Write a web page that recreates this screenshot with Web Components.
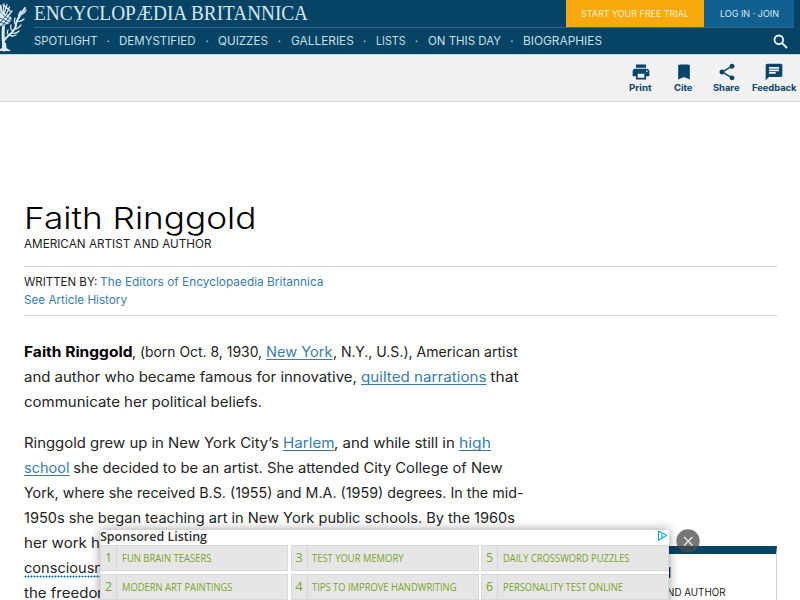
<!DOCTYPE html>
<html lang="en">
<head>
<meta charset="utf-8">
<title>Faith Ringgold</title>
<style>
html,body{margin:0;height:600px;overflow:hidden;background:#fff}
body{font-family:Inter,"Open Sans",sans-serif;color:#1b1b1b}
</style>
</head>
<body>
<article-page></article-page>
<script>
const define = (name, html, setup) => customElements.define(name, class extends HTMLElement {
  connectedCallback() {
    if (this.shadowRoot) return;
    const t = document.createElement('template');
    t.innerHTML = typeof html === 'function' ? html(this) : html;
    this.attachShadow({mode: 'open'}).append(t.content.cloneNode(true));
    if (setup) setup(this);
  }
});

// Text run widened or narrowed to a given advance width.
define('text-run', `<style>:host{display:inline-block;white-space:pre;text-align:left}
span{display:inline-block;transform-origin:0 50%;text-decoration:inherit;text-underline-offset:inherit;text-decoration-skip-ink:none}</style><span><slot></slot></span>`, el => {
  const w = parseFloat(el.getAttribute('w'));
  const span = el.shadowRoot.querySelector('span');
  const scale = w / span.getBoundingClientRect().width;
  span.style.transform = `scaleX(${scale.toFixed(4)})`;
  el.style.width = w + 'px';
});

define('thistle-logo', `<style>:host{display:block;width:28px;height:54px}svg{display:block}</style>
<svg width="28" height="54" viewBox="0 0 28 54" fill="none" stroke="#dcebf1" stroke-linecap="round">
<path stroke="none" fill="#dcebf1" d="M0 14c5-1 10 1 11.500 4 0 5-5 8-11.500 8z"/>
<path stroke-width="1.300" d="M0 5V14M1 6l1 8M4 4 3 14M7 4.500 4 14M9.500 7 6 15M12 11 8 16M3 5l5 4M6 7l4 4"/>
<path stroke="#0a4769" stroke-width=".8" d="M0 18l10 5M0 22l8 3M3 15l8 6M2 26l8-10M0 23l7-8"/>
<path stroke-width="3" d="M3.500 27C2.500 35 3.500 43 4 50"/>
<path stroke-width="2" d="M4.500 40C8 34 15 33 16 25 16 19 21 15 25 8"/>
<path stroke-width="1.300" d="M16 25c-2-2-2-4-1-7M17 21c3 1 5 0 7-2M19 18c-1-3 0-5 2-7M22 14c2 0 3-2 4-4M15 29c3 0 4-2 6-4M13 31c-2-1-3-3-2-6M12 33c3 1 5 0 7-2M9 35c-2-1-2-3-1-5M10 35c2 2 4 1 6 0"/>
<path stroke="none" fill="#dcebf1" d="M2 43h4l.500 5 4.500 3H0v-2l2-1z"/>
</svg>`);

define('site-header', `<style>
:host{display:block;background:#074365;border-bottom:1px solid #c5d2da;box-sizing:border-box;height:55px}
.row{display:flex;height:54px}
.main{flex:1;padding-left:5.500px;padding-right:6px;display:grid;grid-template-rows:28px 26px}
.top{display:flex;justify-content:space-between;background:linear-gradient(#35688a,#35688a) 0 100%/100% 1px no-repeat}
.brand{font:20px/26px "Liberation Serif",serif;color:#d5e8ef}
.buttons{display:flex;font-size:9px;line-height:28px;height:27px}
.trial{background:#f8a90d;width:138px;text-align:center;color:#fff0c8}
.login{background:#12608f;width:90px;text-align:center;color:#d9ecf4}
nav{display:flex;justify-content:space-between;align-items:center;font-size:11.300px;color:#c3e1eb}
.links{display:flex;gap:8.700px}
.dot{width:5px;text-align:center}
svg{margin-right:6px;display:block}
</style>
<div class="row"><thistle-logo></thistle-logo><div class="main">
<div class="top"><div class="brand"><text-run w="157">ENCYCLOPÆDIA </text-run><text-run w="117">BRITANNICA</text-run></div>
<div class="buttons"><div class="trial"><text-run w="108">START YOUR FREE TRIAL</text-run></div><div class="login"><text-run w="59">LOG IN · JOIN</text-run></div></div></div>
<nav><div class="links">
<text-run w="63.500">SPOTLIGHT</text-run><span class="dot">·</span>
<text-run w="76.500">DEMYSTIFIED</text-run><span class="dot">·</span>
<text-run w="50">QUIZZES</text-run><span class="dot">·</span>
<text-run w="62.800">GALLERIES</text-run><span class="dot">·</span>
<text-run w="29.500">LISTS</text-run><span class="dot">·</span>
<text-run w="73">ON THIS DAY</text-run><span class="dot">·</span>
<text-run w="79">BIOGRAPHIES</text-run></div>
<svg width="15" height="15" viewBox="0 0 15 15" fill="none" stroke="#f2f8fb" stroke-width="1.800"><circle cx="5.800" cy="5.800" r="4.300"/><path d="M9 9l5 5"/></svg>
</nav></div></div>`);

const icons = {
  Print: '<path d="M19 8H5c-1.660 0-3 1.340-3 3v6h4v4h12v-4h4v-6c0-1.660-1.340-3-3-3zm-3 11H8v-5h8v5zm3-7c-.550 0-1-.450-1-1s.450-1 1-1 1 .450 1 1-.450 1-1 1zm-1-9H6v4h12V3z"/>',
  Cite: '<path d="M17 3H7c-1.100 0-2 .900-2 2v16l7-3 7 3V5c0-1.100-.900-2-2-2z"/>',
  Share: '<path d="M18 16.080c-.760 0-1.440.300-1.960.770L8.910 12.700c.050-.230.090-.460.090-.700s-.040-.470-.090-.700l7.050-4.110c.540.500 1.250.810 2.040.810 1.660 0 3-1.340 3-3s-1.340-3-3-3-3 1.340-3 3c0 .240.040.470.090.700L8.040 9.810C7.500 9.310 6.790 9 6 9c-1.660 0-3 1.340-3 3s1.340 3 3 3c.790 0 1.500-.310 2.040-.810l7.120 4.160c-.050.210-.080.430-.080.650 0 1.610 1.310 2.920 2.920 2.920s2.920-1.310 2.920-2.920-1.310-2.920-2.920-2.920z"/>',
  Feedback: '<path d="M20 2H4c-1.100 0-2 .900-2 2v18l4-4h14c1.100 0 2-.900 2-2V4c0-1.100-.900-2-2-2zM6 9h12v2H6V9zm8 5H6v-2h8v2zm4-6H6V6h12v2z"/>'
};
define('tool-button', el => `<style>
:host{display:flex;flex-direction:column;align-items:center;color:#07466a;font-weight:700;font-size:8.800px;line-height:12px}
svg{display:block}</style>
<svg width="20" height="20" viewBox="0 0 24 24" fill="currentColor">${icons[el.getAttribute('name')]}</svg>
<text-run w="${el.getAttribute('w')}">${el.getAttribute('name')}</text-run>`);

define('tool-bar', `<style>
:host{display:grid;grid-template-columns:43px 43px 43px 52px;justify-content:end;box-sizing:border-box;height:47px;padding:7px 0 0;background:#f1f1f1;border-bottom:1px solid #d6d6d6}
</style><tool-button name="Print" w="22.500"></tool-button><tool-button name="Cite" w="18.500"></tool-button><tool-button name="Share" w="26.500"></tool-button><tool-button name="Feedback" w="44.500"></tool-button>`);

define('article-heading', `<style>
:host{display:block;padding:96px 23.500px 0}
h1{margin:0;font-size:30px;line-height:40px;font-weight:300;color:#000}
.sub{font-size:11.200px;line-height:14px;margin-top:-1px}
.by{margin-top:15px;border:solid #d3d3d3;border-width:1px 0;padding:6px 0;font-size:11.400px;line-height:18px;height:36px;color:#1b1b1b}
.by div{height:18px}
a{color:#387da8}
</style>
<h1><text-run w="232.500">Faith Ringgold</text-run></h1>
<div class="sub"><text-run w="187.500">AMERICAN ARTIST AND AUTHOR</text-run></div>
<div class="by"><div><text-run w="76.500">WRITTEN BY: </text-run><a><text-run w="223.500">The Editors of Encyclopaedia Britannica</text-run></a></div><div><a><text-run w="103">See Article History</text-run></a></div></div>`);

const paragraphs = [
  [[['b','Faith Ringgold',108.5],['',', (born Oct. 8, 1930, ',134],['a','New York',66.5],['',', N.Y., U.S.), American artist',184.5]],
   [['','and author who became famous for innovative, ',337],['a','quilted narrations',125.5],['',' that',32.5]],
   [['','communicate her political beliefs.',238]]],
  [[['','Ringgold grew up in New York City’s ',259],['a','Harlem',51.5],['',', and while still in ',125],['a','high',32]],
   [['a','school',45.5],['',' she decided to be an artist. She attended City College of New',433.5]],
   [['','York, where she received B.S. (1955) and M.A. (1959) degrees. In the mid-',499.5]],
   [['','1950s she began teaching art in New York public schools. By the 1960s',491]],
   [['','her work h',76]],
   [['t','consciousn',79]],
   [['','the freedo',73.5],['cut','m',13.5]]]];
const run = ([k, s, w]) => {
  const r = `<text-run w="${w}">${s}</text-run>`;
  return k === 'a' || k === 'b' ? `<${k}>${r}</${k}>` : k ? `<span class="${k}">${r}</span>` : r;
};
define('article-body', () => `<style>
:host{display:block;padding:23px 0 0 23.500px;font-size:14px;line-height:25px;color:#222}
p{margin:0 0 15.500px;white-space:nowrap}
.line{display:block;height:25px}
a text-run{color:#387da8;text-decoration:underline 1px;text-underline-offset:2px}
b{color:#000}
.t text-run{background:radial-gradient(circle,#07669b .9px,transparent 1.100px) 0 100%/3px 3px repeat-x;height:23.500px;vertical-align:top}
.cut{display:inline-block;width:3.500px;height:25px;overflow:hidden;vertical-align:top}
</style>` + paragraphs.map(p => `<p>${p.map(l => `<span class="line">${l.map(run).join('')}</span>`).join('')}</p>`).join(''));

define('side-card', `<style>
:host{position:absolute;left:546px;top:546px;width:229px;height:70px;border:1px solid #d0d0d0;border-top:8px solid #074365;background:#fff;color:#1b1b1b}
.n{font-size:15px;line-height:18px;text-align:right;width:124.500px;margin-top:10px}
.s{font-size:10px;line-height:14px;margin-top:3px;text-align:right;width:178px}
</style><div class="n">d</div><div class="s"><text-run w="58.500">ND AUTHOR</text-run></div>`);

define('ad-item', el => `<style>
:host{display:flex;box-sizing:border-box;height:26px;background:#e6e6e6;border:1px solid #d8d8d8;color:#7ba428;font:10.300px/24px "Open Sans",sans-serif}
.n{width:15px;border-right:1px solid #d6d6d6;text-align:center;font-size:12.500px}
.t{padding-left:4.500px}
</style><div class="n">${el.getAttribute('n')}</div><div class="t"><text-run w="${el.getAttribute('w')}">${el.getAttribute('label')}</text-run></div>`);

define('sponsored-listing', `<style>
:host{position:absolute;left:100px;top:530px;width:569px;height:80px;background:#fff;box-shadow:0 0 10px rgba(0,0,0,.4)}
header{height:15px;display:flex;justify-content:space-between;font:600 12px/13px "Open Sans",sans-serif;color:#303030}
header svg{margin-right:1px}
.grid{display:grid;grid-template-columns:188px 188px 188px;grid-auto-rows:26px;column-gap:2.500px;row-gap:3px}
.close{position:absolute;left:576px;top:-1px}
</style>
<header><text-run w="107">Sponsored Listing</text-run><svg width="11" height="12" viewBox="0 0 11 12" fill="none" stroke="#13a9bb" stroke-width="1.200"><path d="M1.500 1 9.500 5.500 1.500 10.300V1M4.800 4.500v3"/></svg></header>
<div class="grid">
<ad-item n="1" w="89.500" label="FUN BRAIN TEASERS"></ad-item><ad-item n="3" w="91.500" label="TEST YOUR MEMORY"></ad-item><ad-item n="5" w="126.500" label="DAILY CROSSWORD PUZZLES"></ad-item>
<ad-item n="2" w="110.500" label="MODERN ART PAINTINGS"></ad-item><ad-item n="4" w="144.500" label="TIPS TO IMPROVE HANDWRITING"></ad-item><ad-item n="6" w="120" label="PERSONALITY TEST ONLINE"></ad-item>
</div>
<svg class="close" width="24" height="24" viewBox="0 0 24 24"><circle cx="12" cy="12" r="11.700" fill="#4a4a4a" fill-opacity=".75"/><path d="M8 8l8.500 8.500M16.500 8 8 16.500" stroke="#e8e8e8" stroke-width="1.400"/></svg>`);

define('article-page', `<style>:host{display:block;position:relative;width:800px;height:600px;overflow:hidden;background:#fff}</style>
<site-header></site-header><tool-bar></tool-bar><article-heading></article-heading><article-body></article-body><side-card></side-card><sponsored-listing></sponsored-listing>`);
</script>
</body>
</html>
